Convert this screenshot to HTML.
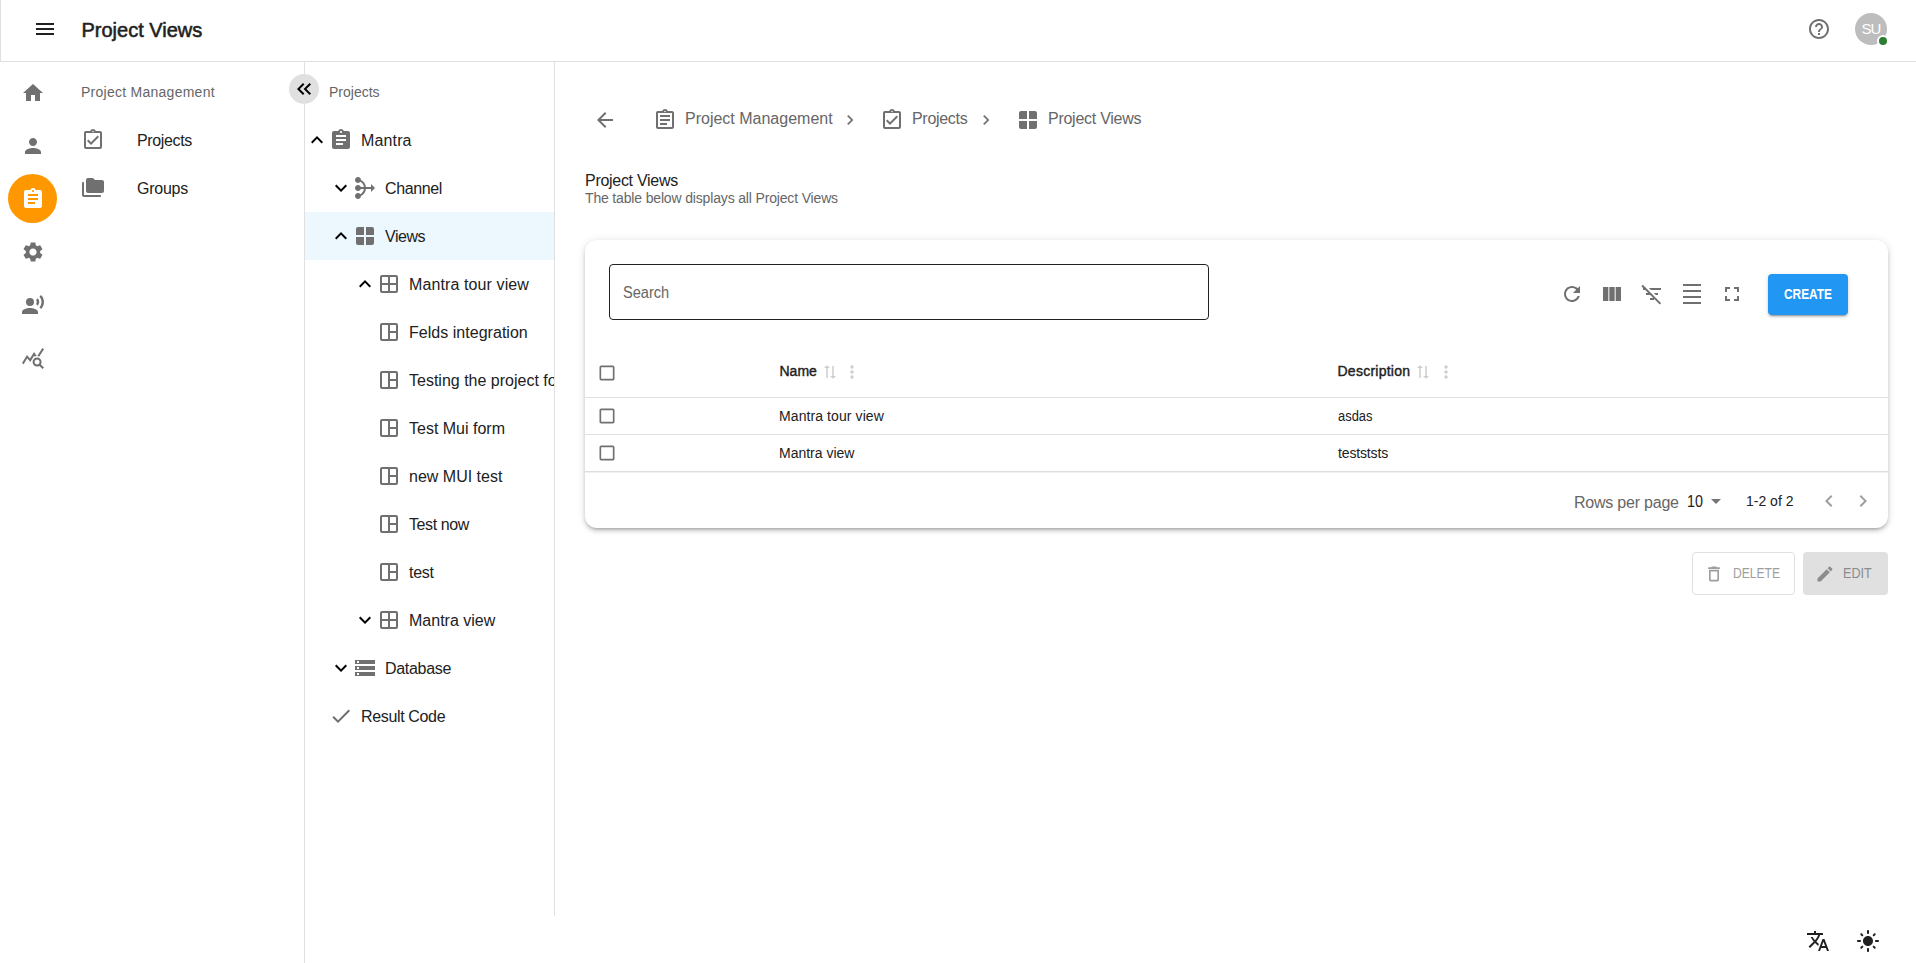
<!DOCTYPE html>
<html lang="en">
<head>
<meta charset="utf-8">
<title>Project Views</title>
<style>
*{box-sizing:border-box;margin:0;padding:0}
html,body{width:1916px;height:963px;overflow:hidden;background:#fff}
body{font-family:"Liberation Sans",sans-serif;color:#212121;position:relative}
.abs{position:absolute}
.t{position:absolute;white-space:nowrap;line-height:20px;height:20px}
svg.i{position:absolute;width:24px;height:24px;fill:#707070}
.t16{font-size:16px;line-height:24px;height:24px}
.t14{font-size:14px}
.b14{font-size:14px;font-weight:normal;-webkit-text-stroke:.4px #212121}
.g{color:#666}
.line{position:absolute;background:#e0e0e0}
</style>
</head>
<body>
<!-- TOPBAR -->
<div class="line" style="left:0;top:61px;width:1916px;height:1px"></div>
<div class="line" style="left:0;top:0;width:1px;height:61px"></div>
<svg class="i" style="left:33px;top:17px;fill:#212121" viewBox="0 0 24 24"><path d="M3 18h18v-2H3v2zm0-5h18v-2H3v2zm0-7v2h18V6H3z"/></svg>
<div class="t" id="title" style="left:81.5px;top:18px;font-size:20px;line-height:24px;height:24px;font-weight:normal;-webkit-text-stroke:0.55px #212121;letter-spacing:0px">Project Views</div>

<svg class="i" style="left:1807px;top:17px" viewBox="0 0 24 24"><path d="M11 18h2v-2h-2v2zm1-16C6.480 2 2 6.480 2 12s4.480 10 10 10 10-4.480 10-10S17.520 2 12 2zm0 18c-4.410 0-8-3.590-8-8s3.590-8 8-8 8 3.590 8 8-3.590 8-8 8zm0-14c-2.210 0-4 1.790-4 4h2c0-1.100.9-2 2-2s2 .9 2 2c0 2-3 1.750-3 5h2c0-2.250 3-2.500 3-5 0-2.210-1.790-4-4-4z"/></svg>
<div class="abs" style="left:1855px;top:13px;width:32px;height:32px;border-radius:50%;background:#bdbdbd"></div>
<div class="t" id="su" style="left:1855px;top:17px;width:32px;text-align:center;color:#fff;font-size:15px;line-height:24px;height:24px;letter-spacing:-1px">SU</div>
<div class="abs" style="left:1877px;top:35px;width:12px;height:12px;border-radius:50%;background:#fff"></div>
<div class="abs" style="left:1879px;top:37px;width:8px;height:8px;border-radius:50%;background:#2e7d32"></div>


<svg class="i" style="left:21px;top:81px" viewBox="0 0 24 24"><path d="M10 20v-6h4v6h5v-8h3L12 3 2 12h3v8z"/></svg>
<svg class="i" style="left:21px;top:134px" viewBox="0 0 24 24"><path d="M12 12c2.210 0 4-1.790 4-4s-1.790-4-4-4-4 1.790-4 4 1.790 4 4 4zm0 2c-2.670 0-8 1.340-8 4v2h16v-2c0-2.660-5.330-4-8-4z"/></svg>
<div class="abs" style="left:8px;top:174px;width:49px;height:49px;border-radius:50%;background:#ff9800"></div>
<svg class="i" style="left:21px;top:187px;fill:#fff" viewBox="0 0 24 24"><path d="M19 3h-4.180C14.400 1.840 13.300 1 12 1c-1.300 0-2.400.840-2.820 2H5c-1.100 0-2 .9-2 2v14c0 1.100.9 2 2 2h14c1.100 0 2-.9 2-2V5c0-1.100-.9-2-2-2zm-7 0c.550 0 1 .450 1 1s-.450 1-1 1-1-.450-1-1 .450-1 1-1zm2 14H7v-2h7v2zm3-4H7v-2h10v2zm0-4H7V7h10v2z"/></svg>
<svg class="i" style="left:21px;top:240px" viewBox="0 0 24 24"><path d="M19.140 12.940c.040-.3.060-.610.060-.940 0-.320-.020-.640-.070-.940l2.030-1.580c.180-.140.230-.410.120-.610l-1.920-3.320c-.120-.220-.370-.290-.590-.220l-2.390.960c-.5-.380-1.030-.7-1.620-.940l-.360-2.540c-.040-.240-.240-.410-.480-.410h-3.840c-.240 0-.430.170-.470.410l-.360 2.540c-.590.240-1.130.570-1.620.940l-2.390-.960c-.220-.080-.470 0-.590.220L2.740 8.870c-.120.210-.080.470.120.610l2.030 1.580c-.050.3-.090.630-.090.940s.020.640.070.940l-2.030 1.580c-.180.140-.230.410-.120.610l1.920 3.320c.120.220.370.290.590.220l2.390-.960c.5.380 1.030.7 1.620.940l.360 2.540c.050.240.240.410.480.410h3.840c.240 0 .440-.170.470-.410l.360-2.540c.590-.240 1.130-.560 1.620-.940l2.390.960c.220.080.470 0 .590-.220l1.920-3.320c.120-.220.070-.470-.120-.610l-2.010-1.580zM12 15.600c-1.980 0-3.600-1.620-3.600-3.600s1.620-3.600 3.600-3.600 3.600 1.620 3.600 3.600-1.620 3.600-3.600 3.600z"/></svg>
<svg class="i" style="left:21px;top:293px" viewBox="0 0 24 24"><circle cx="9" cy="9" r="4"/><path d="M9 15c-2.670 0-8 1.340-8 4v2h16v-2c0-2.660-5.330-4-8-4zm7.760-9.640-1.680 1.690c.840 1.180.840 2.710 0 3.890l1.680 1.690c2.020-2.020 2.020-5.070 0-7.270zM20.070 2l-1.630 1.630c2.770 3.020 2.770 7.560 0 10.740L20.070 16c3.900-3.890 3.910-9.950 0-14z"/></svg>
<svg class="i" style="left:21px;top:346px" viewBox="0 0 24 24"><path d="M19.880 18.470c.440-.7.7-1.510.7-2.390 0-2.490-2.010-4.500-4.500-4.500s-4.500 2.010-4.500 4.500 2.010 4.500 4.490 4.500c.880 0 1.700-.260 2.390-.7L21.580 23 23 21.580l-3.120-3.110zm-3.800.11c-1.380 0-2.500-1.120-2.500-2.500s1.120-2.500 2.500-2.500 2.500 1.120 2.500 2.500-1.120 2.500-2.500 2.500zm-.360-8.500c-.740.020-1.450.180-2.100.450l-.550-.830-3.800 6.180-3.010-3.520-3.630 5.810L1 17l5-8 3 3.500L13 6l2.720 4.080zm2.590.5c-.640-.280-1.330-.450-2.050-.490L21.380 2 23 3.180l-4.690 7.400z"/></svg>


<div class="t g" id="navh" style="left:81px;top:82px;font-size:14px;letter-spacing:0.26px">Project Management</div>
<svg class="i" style="left:81px;top:128px" viewBox="0 0 24 24"><path d="M18 9l-1.410-1.420L10 14.170l-2.590-2.580L6 13l4 4zm1-6h-4.180C14.400 1.840 13.300 1 12 1c-1.300 0-2.400.840-2.820 2H5c-.140 0-.270.010-.4.040-.390.080-.740.280-1.010.550-.180.180-.330.4-.430.640-.1.230-.160.490-.160.770v14c0 .270.060.540.160.780s.250.450.430.640c.270.270.620.470 1.010.550.130.020.260.030.4.030h14c1.100 0 2-.9 2-2V5c0-1.100-.9-2-2-2zm-7-.250c.410 0 .750.340.750.750s-.340.750-.750.750-.750-.340-.750-.750.340-.750.750-.750zM19 19H5V5h14v14z"/></svg>
<div class="t t16" id="nav1" style="left:137px;top:129px;letter-spacing:-0.37px">Projects</div>
<svg class="i" style="left:81px;top:176px" viewBox="0 0 24 24"><path d="M2 6c-.550 0-1 .450-1 1v12c0 1.100.9 2 2 2h16c.550 0 1-.450 1-1s-.450-1-1-1H3V7c0-.550-.450-1-1-1z"/><path d="M21 4h-7l-1.410-1.410c-.380-.380-.890-.590-1.420-.590H7c-1.100 0-1.990.9-1.990 2L5 15c0 1.100.9 2 2 2h14c1.100 0 2-.9 2-2V6c0-1.100-.9-2-2-2z"/></svg>
<div class="t t16" id="nav2" style="left:137px;top:177px;letter-spacing:-0.26px">Groups</div>
<div class="line" style="left:304px;top:62px;width:1px;height:901px"></div>
<div class="abs" style="left:289px;top:74px;width:30px;height:30px;border-radius:50%;background:#e0e0e0"></div>
<svg class="i" style="left:292px;top:77px;fill:#000" viewBox="0 0 24 24"><path d="M17.590 18 19 16.590 14.420 12 19 7.410 17.590 6l-6 6z"/><path d="m11 18 1.410-1.410L7.830 12l4.580-4.590L11 6l-6 6z"/></svg>

<div class="abs" style="left:305px;top:212px;width:249px;height:48px;background:#edf7fe"></div>
<div class="t g" id="treeh" style="left:329px;top:82px;font-size:14px;letter-spacing:0px">Projects</div>
<div class="abs" id="tree" style="left:305px;top:62px;width:249px;height:853px;overflow:hidden">
<svg class="i" style="left:0px;top:66px;fill:#000" viewBox="0 0 24 24"><path d="m12 8-6 6 1.410 1.410L12 10.830l4.590 4.580L18 14z"/></svg>
<svg class="i" style="left:24px;top:66px" viewBox="0 0 24 24"><path d="M19 3h-4.180C14.400 1.840 13.300 1 12 1c-1.300 0-2.400.840-2.820 2H5c-1.100 0-2 .9-2 2v14c0 1.100.9 2 2 2h14c1.100 0 2-.9 2-2V5c0-1.100-.9-2-2-2zm-7 0c.550 0 1 .450 1 1s-.450 1-1 1-1-.450-1-1 .450-1 1-1zm2 14H7v-2h7v2zm3-4H7v-2h10v2zm0-4H7V7h10v2z"/></svg>
<div class="t t16" id="tr0" style="left:56px;top:67px;letter-spacing:0.14px">Mantra</div>
<svg class="i" style="left:24px;top:114px;fill:#000" viewBox="0 0 24 24"><path d="M16.590 8.590 12 13.170 7.410 8.590 6 10l6 6 6-6z"/></svg>
<svg class="i" style="left:48px;top:114px" viewBox="0 0 24 24"><path d="M18 13h-5.060c-.340 3.100-2.260 5.720-4.940 7.050C7.960 21.690 6.640 23 5 23c-1.660 0-3-1.340-3-3s1.340-3 3-3c.950 0 1.780.450 2.330 1.140 1.900-1.030 3.260-2.910 3.580-5.140h-3.100C7.400 14.160 6.300 15 5 15c-1.660 0-3-1.340-3-3s1.340-3 3-3c1.300 0 2.400.840 2.820 2h3.100c-.320-2.230-1.690-4.100-3.590-5.140C6.780 6.550 5.950 7 5 7 3.340 7 2 5.660 2 4s1.340-3 3-3c1.640 0 2.960 1.310 2.990 2.950 2.680 1.330 4.600 3.950 4.940 7.050H18V8l4 4-4 4v-3z"/></svg>
<div class="t t16" id="tr1" style="left:80px;top:115px;letter-spacing:-0.37px">Channel</div>
<svg class="i" style="left:24px;top:162px;fill:#000" viewBox="0 0 24 24"><path d="m12 8-6 6 1.410 1.410L12 10.830l4.590 4.580L18 14z"/></svg>
<svg class="i" style="left:48px;top:162px" viewBox="0 0 24 24"><path d="M5 3h6v8H3V5c0-1.100.9-2 2-2zM13 3h6c1.100 0 2 .9 2 2v6h-8V3zM3 13h8v8H5c-1.100 0-2-.9-2-2v-6zM13 13h8v6c0 1.100-.9 2-2 2h-6v-8z"/></svg>
<div class="t t16" id="tr2" style="left:80px;top:163px;letter-spacing:-0.45px">Views</div>
<svg class="i" style="left:48px;top:210px;fill:#000" viewBox="0 0 24 24"><path d="m12 8-6 6 1.410 1.410L12 10.830l4.590 4.580L18 14z"/></svg>
<svg class="i" style="left:72px;top:210px" viewBox="0 0 24 24"><path d="M19 3H5c-1.100 0-2 .9-2 2v14c0 1.100.9 2 2 2h14c1.100 0 2-.9 2-2V5c0-1.100-.9-2-2-2zM5 5h6v6H5V5zm0 14v-6h6v6H5zm14 0h-6v-6h6v6zm0-8h-6V5h6v6z"/></svg>
<div class="t t16" id="tr3" style="left:104px;top:211px;letter-spacing:0.11px">Mantra tour view</div>
<svg class="i" style="left:72px;top:258px" viewBox="0 0 24 24"><path d="M19 3H5c-1.100 0-2 .9-2 2v14c0 1.100.9 2 2 2h14c1.100 0 2-.9 2-2V5c0-1.100-.9-2-2-2zM5 19V5h6v14H5zm14 0h-6v-6h6v6zm0-8h-6V5h6v6z"/></svg>
<div class="t t16" id="tr4" style="left:104px;top:259px;letter-spacing:0.03px">Felds integration</div>
<svg class="i" style="left:72px;top:306px" viewBox="0 0 24 24"><path d="M19 3H5c-1.100 0-2 .9-2 2v14c0 1.100.9 2 2 2h14c1.100 0 2-.9 2-2V5c0-1.100-.9-2-2-2zM5 19V5h6v14H5zm14 0h-6v-6h6v6zm0-8h-6V5h6v6z"/></svg>
<div class="t t16" id="tr5" style="left:104px;top:307px">Testing the project form</div>
<svg class="i" style="left:72px;top:354px" viewBox="0 0 24 24"><path d="M19 3H5c-1.100 0-2 .9-2 2v14c0 1.100.9 2 2 2h14c1.100 0 2-.9 2-2V5c0-1.100-.9-2-2-2zM5 19V5h6v14H5zm14 0h-6v-6h6v6zm0-8h-6V5h6v6z"/></svg>
<div class="t t16" id="tr6" style="left:104px;top:355px">Test Mui form</div>
<svg class="i" style="left:72px;top:402px" viewBox="0 0 24 24"><path d="M19 3H5c-1.100 0-2 .9-2 2v14c0 1.100.9 2 2 2h14c1.100 0 2-.9 2-2V5c0-1.100-.9-2-2-2zM5 19V5h6v14H5zm14 0h-6v-6h6v6zm0-8h-6V5h6v6z"/></svg>
<div class="t t16" id="tr7" style="left:104px;top:403px">new MUI test</div>
<svg class="i" style="left:72px;top:450px" viewBox="0 0 24 24"><path d="M19 3H5c-1.100 0-2 .9-2 2v14c0 1.100.9 2 2 2h14c1.100 0 2-.9 2-2V5c0-1.100-.9-2-2-2zM5 19V5h6v14H5zm14 0h-6v-6h6v6zm0-8h-6V5h6v6z"/></svg>
<div class="t t16" id="tr8" style="left:104px;top:451px;letter-spacing:-0.39px">Test now</div>
<svg class="i" style="left:72px;top:498px" viewBox="0 0 24 24"><path d="M19 3H5c-1.100 0-2 .9-2 2v14c0 1.100.9 2 2 2h14c1.100 0 2-.9 2-2V5c0-1.100-.9-2-2-2zM5 19V5h6v14H5zm14 0h-6v-6h6v6zm0-8h-6V5h6v6z"/></svg>
<div class="t t16" id="tr9" style="left:104px;top:499px;letter-spacing:-0.27px">test</div>
<svg class="i" style="left:48px;top:546px;fill:#000" viewBox="0 0 24 24"><path d="M16.590 8.590 12 13.170 7.410 8.590 6 10l6 6 6-6z"/></svg>
<svg class="i" style="left:72px;top:546px" viewBox="0 0 24 24"><path d="M19 3H5c-1.100 0-2 .9-2 2v14c0 1.100.9 2 2 2h14c1.100 0 2-.9 2-2V5c0-1.100-.9-2-2-2zM5 5h6v6H5V5zm0 14v-6h6v6H5zm14 0h-6v-6h6v6zm0-8h-6V5h6v6z"/></svg>
<div class="t t16" id="tr10" style="left:104px;top:547px">Mantra view</div>
<svg class="i" style="left:24px;top:594px;fill:#000" viewBox="0 0 24 24"><path d="M16.590 8.590 12 13.170 7.410 8.590 6 10l6 6 6-6z"/></svg>
<svg class="i" style="left:48px;top:594px" viewBox="0 0 24 24"><path d="M2 20h20v-4H2v4zm2-3h2v2H4v-2zM2 4v4h20V4H2zm4 3H4V5h2v2zm-4 7h20v-4H2v4zm2-3h2v2H4v-2z"/></svg>
<div class="t t16" id="tr11" style="left:80px;top:595px;letter-spacing:-0.31px">Database</div>
<svg class="i" style="left:24px;top:642px" viewBox="0 0 24 24"><path d="M9 16.170 4.830 12l-1.420 1.410L9 19 21 7l-1.410-1.410z"/></svg>
<div class="t t16" id="tr12" style="left:56px;top:643px;letter-spacing:-0.35px">Result Code</div>
</div>
<div class="line" style="left:554px;top:62px;width:1px;height:854px"></div>

<svg class="i" style="left:593px;top:108px" viewBox="0 0 24 24"><path d="M20 11H7.830l5.590-5.590L12 4l-8 8 8 8 1.410-1.410L7.830 13H20v-2z"/></svg>
<svg class="i" style="left:653px;top:108px" viewBox="0 0 24 24"><path d="M7 15h7v2H7zm0-4h10v2H7zm0-4h10v2H7zm12-4h-4.180C14.400 1.840 13.300 1 12 1c-1.300 0-2.400.840-2.820 2H5c-.140 0-.270.010-.4.040-.390.080-.740.280-1.010.550-.180.180-.330.4-.430.640-.1.230-.160.490-.160.770v14c0 .270.060.540.160.780s.250.450.430.640c.270.270.620.470 1.010.550.130.020.260.030.4.030h14c1.100 0 2-.9 2-2V5c0-1.100-.9-2-2-2zm-7-.250c.410 0 .750.340.750.750s-.340.750-.750.750-.750-.340-.750-.750.340-.750.750-.750zM19 19H5V5h14v14z"/></svg>
<div class="t t16 g" id="bc1" style="left:685px;top:107px">Project Management</div>
<svg class="i" style="left:840px;top:110px;width:20px;height:20px" viewBox="0 0 24 24"><path d="M10 6 8.590 7.410 13.170 12l-4.580 4.590L10 18l6-6z"/></svg>
<svg class="i" style="left:880px;top:108px" viewBox="0 0 24 24"><path d="M18 9l-1.410-1.420L10 14.170l-2.590-2.580L6 13l4 4zm1-6h-4.180C14.400 1.840 13.300 1 12 1c-1.300 0-2.400.840-2.820 2H5c-.140 0-.270.010-.4.040-.390.080-.740.280-1.010.550-.180.180-.330.4-.430.640-.1.230-.160.490-.160.770v14c0 .270.060.540.160.780s.250.450.430.640c.270.270.620.470 1.010.550.130.020.260.030.4.030h14c1.100 0 2-.9 2-2V5c0-1.100-.9-2-2-2zm-7-.250c.410 0 .750.340.750.750s-.340.750-.750.750-.750-.340-.750-.750.340-.750.750-.750zM19 19H5V5h14v14z"/></svg>
<div class="t t16 g" id="bc2" style="left:912px;top:107px;letter-spacing:-0.31px">Projects</div>
<svg class="i" style="left:976px;top:110px;width:20px;height:20px" viewBox="0 0 24 24"><path d="M10 6 8.590 7.410 13.170 12l-4.580 4.590L10 18l6-6z"/></svg>
<svg class="i" style="left:1016px;top:108px" viewBox="0 0 24 24"><path d="M5 3h6v8H3V5c0-1.100.9-2 2-2zM13 3h6c1.100 0 2 .9 2 2v6h-8V3zM3 13h8v8H5c-1.100 0-2-.9-2-2v-6zM13 13h8v6c0 1.100-.9 2-2 2h-6v-8z"/></svg>
<div class="t t16 g" id="bc3" style="left:1048px;top:107px;letter-spacing:-0.26px">Project Views</div>
<div class="t t16" id="h1" style="left:585px;top:169px;letter-spacing:-0.29px">Project Views</div>
<div class="t g" id="h2" style="left:585px;top:188px;font-size:14px;letter-spacing:-0.16px">The table below displays all Project Views</div>
<div class="abs" id="card" style="left:585px;top:240px;width:1303px;height:288px;border-radius:12px;background:#fff;box-shadow:0 3px 3px -2px rgba(0,0,0,.2),0 3px 4px 0 rgba(0,0,0,.14),0 1px 8px 0 rgba(0,0,0,.12)"></div>
<div class="abs" style="left:609px;top:264px;width:600px;height:56px;border:1px solid #212121;border-radius:4px"></div>
<div class="t t16 g" id="search" style="left:623px;top:281px;transform:scaleX(0.912);transform-origin:left center">Search</div>
<svg class="i" style="left:1560px;top:282px" viewBox="0 0 24 24"><path d="M17.650 6.350C16.200 4.900 14.210 4 12 4c-4.420 0-7.990 3.580-7.990 8s3.570 8 7.990 8c3.730 0 6.840-2.550 7.730-6h-2.080c-.820 2.330-3.040 4-5.650 4-3.310 0-6-2.690-6-6s2.690-6 6-6c1.660 0 3.140.690 4.220 1.780L13 11h7V4l-2.350 2.350z"/></svg>
<svg class="i" style="left:1600px;top:282px" viewBox="0 0 24 24"><path d="M14.670 5v14H9.330V5h5.340zm1 14H21V5h-5.330v14zm-7.340 0V5H3v14h5.330z"/></svg>
<svg class="i" style="left:1640px;top:282px" viewBox="0 0 24 24"><path d="M10.830 8H21V6H8.830l2 2zm5 5H18v-2h-4.170l2 2zM14 16.830V18h-4v-2h3.170l-3-3H6v-2h2.170l-3-3H3V6h.170L1.390 4.220 2.800 2.810l18.380 18.380-1.410 1.410L14 16.830z"/></svg>
<svg class="i" style="left:1680px;top:282px" viewBox="0 0 24 24"><path d="M3 2h18v2H3zm0 18h18v2H3zm0-6h18v2H3zm0-6h18v2H3z"/></svg>
<svg class="i" style="left:1720px;top:282px" viewBox="0 0 24 24"><path d="M7 14H5v5h5v-2H7v-3zm-2-4h2V7h3V5H5v5zm12 7h-3v2h5v-5h-2v3zM14 5v2h3v3h2V5h-5z"/></svg>
<div class="abs" style="left:1768px;top:274px;width:80px;height:40.5px;border-radius:4px;background:#2196f3;box-shadow:0 3px 1px -2px rgba(0,0,0,.2),0 2px 2px 0 rgba(0,0,0,.14),0 1px 5px 0 rgba(0,0,0,.12)"></div>
<div class="t" id="create" style="left:1768px;top:284px;width:80px;text-align:center;color:#fff;font-size:14px;font-weight:bold;transform:scaleX(0.85);transform-origin:center center">CREATE</div>
<svg class="i" style="left:597px;top:363px;width:20px;height:20px" viewBox="0 0 24 24"><path d="M19 5v14H5V5h14m0-2H5c-1.100 0-2 .9-2 2v14c0 1.100.9 2 2 2h14c1.100 0 2-.9 2-2V5c0-1.100-.9-2-2-2z"/></svg>
<div class="t b14" id="thn" style="left:779.5px;top:361px;letter-spacing:0px">Name</div>
<svg class="i" style="left:821px;top:363px;fill:#000;width:18px;height:18px;opacity:.19;transform:rotate(-90deg) scaleX(.9)" viewBox="0 0 24 24"><path d="m18 12 4-4-4-4v3H3v2h15zM6 12l-4 4 4 4v-3h15v-2H6z"/></svg>
<svg class="i" style="left:842px;top:362px;fill:#000;width:20px;height:20px;opacity:.19" viewBox="0 0 24 24"><path d="M12 8c1.100 0 2-.9 2-2s-.9-2-2-2-2 .9-2 2 .9 2 2 2zm0 2c-1.100 0-2 .9-2 2s.9 2 2 2 2-.9 2-2-.9-2-2-2zm0 6c-1.100 0-2 .9-2 2s.9 2 2 2 2-.9 2-2-.9-2-2-2z"/></svg>
<div class="t b14" id="thd" style="left:1337.5px;top:361px;letter-spacing:0.25px">Description</div>
<svg class="i" style="left:1414px;top:363px;fill:#000;width:18px;height:18px;opacity:.19;transform:rotate(-90deg) scaleX(.9)" viewBox="0 0 24 24"><path d="m18 12 4-4-4-4v3H3v2h15zM6 12l-4 4 4 4v-3h15v-2H6z"/></svg>
<svg class="i" style="left:1436px;top:362px;fill:#000;width:20px;height:20px;opacity:.19" viewBox="0 0 24 24"><path d="M12 8c1.100 0 2-.9 2-2s-.9-2-2-2-2 .9-2 2 .9 2 2 2zm0 2c-1.100 0-2 .9-2 2s.9 2 2 2 2-.9 2-2-.9-2-2-2zm0 6c-1.100 0-2 .9-2 2s.9 2 2 2 2-.9 2-2-.9-2-2-2z"/></svg>
<div class="line" style="left:585px;top:397px;width:1303px;height:1px"></div>
<svg class="i" style="left:597px;top:406px;width:20px;height:20px" viewBox="0 0 24 24"><path d="M19 5v14H5V5h14m0-2H5c-1.100 0-2 .9-2 2v14c0 1.100.9 2 2 2h14c1.100 0 2-.9 2-2V5c0-1.100-.9-2-2-2z"/></svg>
<div class="t t14" id="r1n" style="left:779px;top:406px;letter-spacing:0.09px">Mantra tour view</div>
<div class="t t14" id="r1d" style="left:1338px;top:406px;transform:scaleX(0.921622);transform-origin:left center">asdas</div>
<div class="line" style="left:585px;top:434px;width:1303px;height:1px"></div>
<svg class="i" style="left:597px;top:443px;width:20px;height:20px" viewBox="0 0 24 24"><path d="M19 5v14H5V5h14m0-2H5c-1.100 0-2 .9-2 2v14c0 1.100.9 2 2 2h14c1.100 0 2-.9 2-2V5c0-1.100-.9-2-2-2z"/></svg>
<div class="t t14" id="r2n" style="left:779px;top:443px">Mantra view</div>
<div class="t t14" id="r2d" style="left:1338px;top:443px;letter-spacing:-0.15px">testststs</div>
<div class="line" style="left:585px;top:471px;width:1303px;height:1px;background:#dedede"></div>
<div class="line" style="left:585px;top:472px;width:1303px;height:1px;background:#f1f1f1"></div>
<div class="t t16 g" id="rpp" style="left:1574px;top:491px;letter-spacing:-0.22px">Rows per page</div>
<div class="t t16" id="ten" style="left:1687px;top:490px;transform:scaleX(0.894118);transform-origin:left center">10</div>
<svg class="i" style="left:1704px;top:489px;fill:#757575" viewBox="0 0 24 24"><path d="m7 10 5 5 5-5z"/></svg>
<div class="t t14" id="rng" style="left:1746px;top:491px">1-2 of 2</div>
<svg class="i" style="left:1817px;top:489px;fill:#9e9e9e" viewBox="0 0 24 24"><path d="M15.410 7.410 14 6l-6 6 6 6 1.410-1.410L10.830 12z"/></svg>
<svg class="i" style="left:1851px;top:489px;fill:#9e9e9e" viewBox="0 0 24 24"><path d="M10 6 8.590 7.410 13.170 12l-4.580 4.590L10 18l6-6z"/></svg>
<div class="abs" style="left:1692px;top:552px;width:103px;height:42.5px;border:1px solid #e0e0e0;border-radius:4px"></div>
<svg class="i" style="left:1703.5px;top:564px;fill:#9e9e9e;width:20px;height:20px" viewBox="0 0 24 24"><path d="M6 19c0 1.100.9 2 2 2h8c1.100 0 2-.9 2-2V7H6v12zM8 9h8v10H8V9zm7.500-5-1-1h-5l-1 1H5v2h14V4h-3.500z"/></svg>
<div class="t t14" id="del" style="left:1733px;top:563px;color:#9e9e9e;transform:scaleX(0.864151);transform-origin:left center">DELETE</div>
<div class="abs" style="left:1803px;top:552px;width:85px;height:42.5px;background:#e0e0e0;border-radius:4px"></div>
<svg class="i" style="left:1814.5px;top:564px;fill:#8c8c8c;width:20px;height:20px" viewBox="0 0 24 24"><path d="M3 17.250V21h3.750L17.810 9.940l-3.750-3.750L3 17.250zM20.710 7.040c.390-.390.390-1.020 0-1.410l-2.340-2.340a.9959.9959 0 0 0-1.410 0l-1.830 1.830 3.750 3.750 1.830-1.830z"/></svg>
<div class="t t14" id="edit" style="left:1843px;top:563px;color:#8c8c8c;transform:scaleX(0.9);transform-origin:left center">EDIT</div>

<svg class="i" style="left:1806px;top:929px;fill:#212121" viewBox="0 0 24 24"><path d="m12.870 15.070-2.540-2.510.030-.030c1.740-1.940 2.980-4.170 3.710-6.530H17V4h-7V2H8v2H1v1.990h11.170C11.500 7.920 10.440 9.750 9 11.350 8.070 10.320 7.300 9.190 6.690 8h-2c.730 1.630 1.730 3.170 2.980 4.560l-5.090 5.020L4 19l5-5 3.110 3.110.760-2.040zM18.500 10h-2L12 22h2l1.120-3h4.750L21 22h2l-4.500-12zm-2.620 7 1.620-4.330L19.120 17h-3.240z"/></svg>
<svg class="i" style="left:1856px;top:929px;fill:#212121" viewBox="0 0 24 24"><path d="M12 7c-2.760 0-5 2.240-5 5s2.240 5 5 5 5-2.240 5-5-2.240-5-5-5zM2 13h2c.550 0 1-.450 1-1s-.450-1-1-1H2c-.550 0-1 .450-1 1s.450 1 1 1zm18 0h2c.550 0 1-.450 1-1s-.450-1-1-1h-2c-.550 0-1 .450-1 1s.450 1 1 1zM11 2v2c0 .550.450 1 1 1s1-.450 1-1V2c0-.550-.450-1-1-1s-1 .450-1 1zm0 18v2c0 .550.450 1 1 1s1-.450 1-1v-2c0-.550-.450-1-1-1s-1 .450-1 1zM5.990 4.580c-.390-.390-1.030-.390-1.410 0-.390.390-.390 1.030 0 1.410l1.060 1.060c.390.390 1.030.390 1.410 0s.390-1.030 0-1.410L5.990 4.580zm12.370 12.370c-.390-.390-1.030-.390-1.410 0-.390.390-.390 1.030 0 1.410l1.060 1.060c.390.390 1.030.390 1.410 0 .390-.390.390-1.030 0-1.410l-1.060-1.060zm1.060-10.960c.390-.390.390-1.030 0-1.410-.390-.390-1.030-.390-1.410 0l-1.060 1.060c-.390.390-.390 1.030 0 1.410s1.030.390 1.410 0l1.060-1.060zM7.050 18.360c.390-.390.390-1.030 0-1.410-.390-.390-1.030-.390-1.410 0l-1.060 1.060c-.390.390-.390 1.030 0 1.410s1.030.390 1.410 0l1.060-1.060z"/></svg>

</body>
</html>
